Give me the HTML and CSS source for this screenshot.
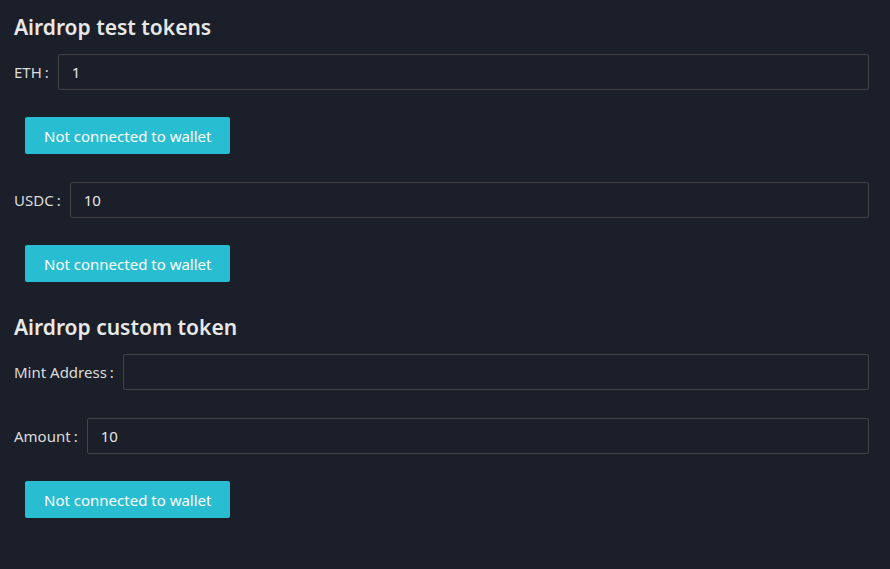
FILE: index.html
```html
<!DOCTYPE html>
<html lang="en">
<head>
  <meta charset="UTF-8" />
  <title>Airdrop</title>
  <link rel="stylesheet" href="styles.css">
</head>
<body>
  <div class="page">
    <h2>Airdrop test tokens</h2>
    <div class="field">
      <label>ETH<span class="colon">:</span></label>
      <input type="text" value="1">
    </div>
    <div class="action"><button>Not connected to wallet</button></div>

    <div class="field">
      <label>USDC<span class="colon">:</span></label>
      <input type="text" value="10">
    </div>
    <div class="action"><button>Not connected to wallet</button></div>

    <h2>Airdrop custom token</h2>
    <div class="field">
      <label>Mint Address<span class="colon">:</span></label>
      <input type="text" value="">
    </div>
    <div class="field">
      <label>Amount<span class="colon">:</span></label>
      <input type="text" value="10">
    </div>
    <div class="action"><button>Not connected to wallet</button></div>
  </div>
</body>
</html>
```

FILE: styles.css
```css
body {
  margin: 0;
  background: #1b1f29;
  color: #e0e0e0;
  font-family: "Noto Sans", "Open Sans", sans-serif;
  font-size: 14px;
}
.page {
  padding: 13px 21px 0 14px;
}
h2 {
  margin: 0 0 13px;
  font-size: 21px;
  line-height: 28px;
  font-weight: 600;
  color: #e8e8e8;
}
.action + h2 {
  margin-top: 31px;
}
.field {
  display: flex;
  align-items: center;
  height: 36px;
  margin-bottom: 27px;
}
.field + .field {
  margin-top: 28px;
}
label {
  color: #dcdcdc;
  font-size: 15px;
  white-space: nowrap;
}
.colon {
  margin: 0 9px 0 3px;
}
input {
  flex: 1;
  height: 36px;
  box-sizing: border-box;
  background: #1b1f29;
  border: 1px solid #434343;
  border-radius: 2px;
  color: #e6e6e6;
  font-family: inherit;
  font-size: 15px;
  padding: 0 13px;
  outline: none;
}
.action {
  padding-left: 11px;
  margin-bottom: 28px;
}
button {
  height: 37px;
  padding: 0 19px;
  background: #29bdd1;
  color: #ffffff;
  border: none;
  border-radius: 2px;
  font-family: inherit;
  font-size: 15px;
  cursor: pointer;
}
```
